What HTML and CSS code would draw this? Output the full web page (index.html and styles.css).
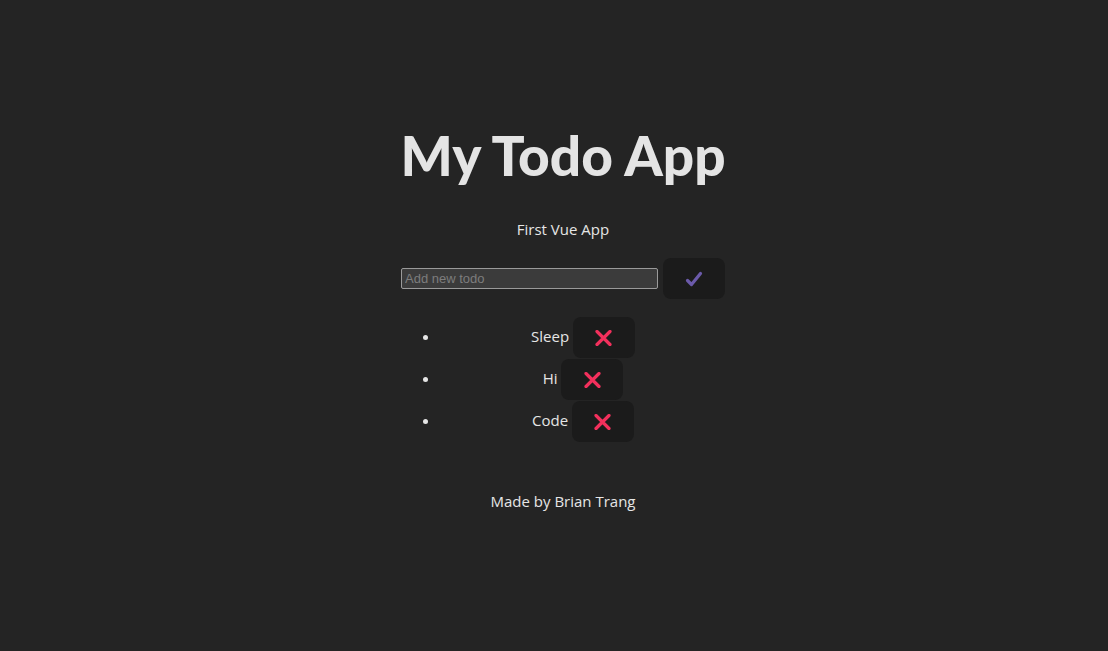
FILE: index.html
```html
<!DOCTYPE html>
<html>
<head>
<meta charset="utf-8">
<link rel="stylesheet" href="styles.css">
</head>
<body>
<div class="app">
  <h1 class="title">My Todo App</h1>
  <p class="subtitle">First Vue App</p>
  <form class="add-form">
    <input class="add-input" type="text" placeholder="Add new todo">
    <button type="button" class="btn">
      <svg width="18" height="16" viewBox="0 0 18 16"><path d="M2.5 9.5 L6.5 13.5 L15.5 2.5" fill="none" stroke="#6b5aaa" stroke-width="3.2" stroke-linecap="round" stroke-linejoin="round"/></svg>
    </button>
  </form>
  <ul class="todos">
    <li class="todo">Sleep <button type="button" class="btn"><svg width="17" height="16" viewBox="0 0 17 16"><path d="M2 1.5 L15 14.5 M15 1.5 L2 14.5" fill="none" stroke="#f2305c" stroke-width="3.2" stroke-linecap="round"/></svg></button></li>
    <li class="todo">Hi <button type="button" class="btn"><svg width="17" height="16" viewBox="0 0 17 16"><path d="M2 1.5 L15 14.5 M15 1.5 L2 14.5" fill="none" stroke="#f2305c" stroke-width="3.2" stroke-linecap="round"/></svg></button></li>
    <li class="todo">Code <button type="button" class="btn"><svg width="17" height="16" viewBox="0 0 17 16"><path d="M2 1.5 L15 14.5 M15 1.5 L2 14.5" fill="none" stroke="#f2305c" stroke-width="3.2" stroke-linecap="round"/></svg></button></li>
  </ul>
  <p class="footer">Made by Brian Trang</p>
</div>
</body>
</html>
```

FILE: styles.css
```css
html, body {
  margin: 0;
  background: #242424;
}
body {
  padding-left: 18px;
  font-family: "Open Sans", "Noto Sans", sans-serif;
  font-size: 15px;
  color: #e6e6e6;
}
.app {
  width: 326px;
  margin: 0 auto;
  padding-top: 120px;
  text-align: center;
}
.title {
  margin: 0 -60px;
  white-space: nowrap;
  font-family: Lato, "Open Sans", sans-serif;
  font-size: 55px;
  line-height: 70px;
  font-weight: 900;
  color: #e4e4e4;
}
.subtitle {
  margin: 28px 0 0;
  line-height: 22px;
}
.add-form {
  margin-top: 18px;
  display: flex;
  align-items: center;
  justify-content: center;
  gap: 5px;
}
.add-input {
  box-sizing: border-box;
  width: 257px;
  height: 21px;
  margin: 0;
  padding: 1px 3px;
  background: #3b3b3b;
  border: 1px solid #9a9a9a;
  border-radius: 2px;
  color: #ddd;
  font-family: "Liberation Sans", Arial, sans-serif;
  font-size: 13px;
}
.add-input::placeholder {
  color: #7d7d7d;
}
.btn {
  box-sizing: border-box;
  width: 62px;
  height: 41px;
  padding: 0;
  border: none;
  border-radius: 8px;
  background: #1b1b1b;
  display: inline-flex;
  align-items: center;
  justify-content: center;
  vertical-align: middle;
  cursor: pointer;
}
.todos {
  margin: 16px 0 0;
  padding-left: 40px;
}
.todo {
  height: 42px;
  line-height: 42px;
  text-align: center;
}
.footer {
  margin: 49px 0 0;
  line-height: 22px;
}
```
